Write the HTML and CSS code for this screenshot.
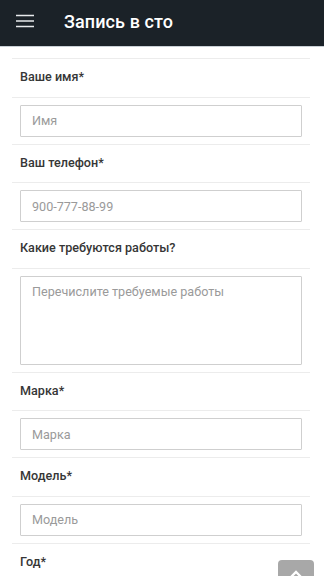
FILE: index.html
```html
<!DOCTYPE html>
<html lang="ru">
<head>
<meta charset="utf-8">
<meta name="viewport" content="width=device-width, initial-scale=1">
<title>Запись в сто</title>
<link rel="stylesheet" href="styles.css">
</head>
<body>
<header class="topbar">
  <button class="menu-btn" aria-label="Меню">
    <svg width="18" height="14" viewBox="0 0 18 14"><path d="M0 1.5h18M0 7h18M0 12.5h18" stroke="#e8eaec" stroke-width="1.6" fill="none"/></svg>
  </button>
  <h1 class="title">Запись в сто</h1>
</header>
<main class="form">
  <div class="row label-row">Ваше имя*</div>
  <div class="row field-row"><input class="field" placeholder="Имя"></div>
  <div class="row label-row">Ваш телефон*</div>
  <div class="row field-row"><input class="field" placeholder="900-777-88-99"></div>
  <div class="row label-row">Какие требуются работы?</div>
  <div class="row field-row"><textarea class="field area" placeholder="Перечислите требуемые работы"></textarea></div>
  <div class="row label-row">Марка*</div>
  <div class="row field-row"><input class="field" placeholder="Марка"></div>
  <div class="row label-row">Модель*</div>
  <div class="row field-row"><input class="field" placeholder="Модель"></div>
  <div class="row label-row">Год*</div>
  <div class="row field-row"><input class="field" placeholder="Год"></div>
</main>
<button class="to-top" aria-label="Наверх">
  <svg width="14" height="10" viewBox="0 0 14 10"><path d="M2 8l5-5 5 5" stroke="#fff" stroke-width="2.4" fill="none"/></svg>
</button>
</body>
</html>
```
FILE: styles.css
```css
html, body {
  margin: 0;
  padding: 0;
  background: #fff;
  font-family: Roboto, "Liberation Sans", sans-serif;
  overflow: hidden;
  height: 576px;
}
.topbar {
  height: 46px;
  background: #1b2228;
  display: flex;
  align-items: center;
  border-bottom: 1px solid #c9d0d6;
}
.menu-btn {
  background: none;
  border: 0;
  padding: 0;
  margin-left: 16px;
  width: 18px;
  height: 14px;
  display: flex;
  margin-top: -4px;
}
.title {
  margin: 0 0 0 30px;
  color: #fff;
  font-size: 18px;
  font-weight: 500;
  margin-top: -4px;
  letter-spacing: 0.1px;
}
.form {
  margin: 11px 14px 0 12px;
  border-top: 1px solid #ececec;
}
.row {
  border-bottom: 1px solid #ececec;
  padding: 0 8px;
}
.label-row {
  box-sizing: border-box;
  height: 38.5px;
  display: flex;
  align-items: center;
  font-size: 12.6px;
  font-weight: 500;
  color: #363636;
  padding-bottom: 2px;
}
.field-row {
  padding-top: 7px;
  padding-bottom: 7px;
  display: flex;
}
.field {
  box-sizing: border-box;
  width: 100%;
  height: 32px;
  border: 1px solid #cfcfcf;
  border-radius: 1px;
  padding: 0 11px;
  font-family: Roboto, "Liberation Sans", sans-serif;
  font-size: 12.6px;
  color: #555;
  background: #fff;
  margin-right: -1px;
}
.field::placeholder {
  color: #9a9a9a;
}
.area {
  height: 89px;
  padding-top: 7px;
  resize: none;
}
.to-top {
  position: fixed;
  right: 10px;
  bottom: -14px;
  width: 36px;
  height: 30px;
  background: #a8a8a8;
  border: 0;
  border-radius: 4px;
  display: flex;
  align-items: flex-start;
  justify-content: center;
  padding: 9px 0 0;
}
```
